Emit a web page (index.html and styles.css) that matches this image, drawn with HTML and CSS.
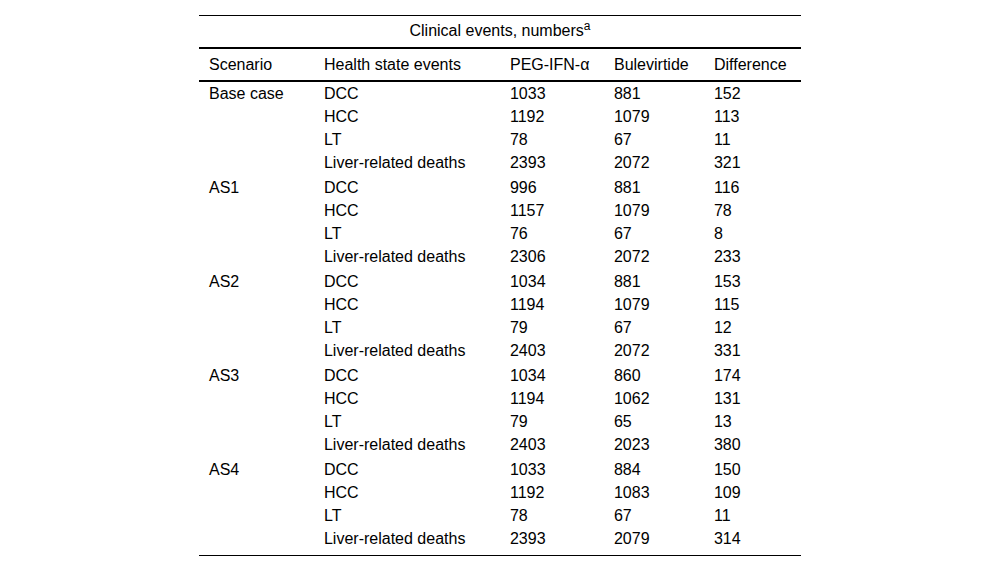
FILE: index.html
```html
<!DOCTYPE html>
<html lang="en">
<head>
<meta charset="utf-8">
<title>Clinical events</title>
<link rel="stylesheet" href="styles.css">
</head>
<body>
<table class="events">
  <colgroup>
    <col class="c-scen"><col class="c-state"><col class="c-peg"><col class="c-bul"><col class="c-diff">
  </colgroup>
  <thead>
    <tr class="title-row"><th colspan="5">Clinical events, numbers<sup>a</sup></th></tr>
    <tr class="head-row"><th>Scenario</th><th>Health state events</th><th>PEG-IFN-α</th><th>Bulevirtide</th><th>Difference</th></tr>
  </thead>
  <tbody>
    <tr><td>Base case</td><td>DCC</td><td>1033</td><td>881</td><td>152</td></tr>
    <tr><td></td><td>HCC</td><td>1192</td><td>1079</td><td>113</td></tr>
    <tr><td></td><td>LT</td><td>78</td><td>67</td><td>11</td></tr>
    <tr><td></td><td>Liver-related deaths</td><td>2393</td><td>2072</td><td>321</td></tr>
    <tr class="group-start"><td>AS1</td><td>DCC</td><td>996</td><td>881</td><td>116</td></tr>
    <tr><td></td><td>HCC</td><td>1157</td><td>1079</td><td>78</td></tr>
    <tr><td></td><td>LT</td><td>76</td><td>67</td><td>8</td></tr>
    <tr><td></td><td>Liver-related deaths</td><td>2306</td><td>2072</td><td>233</td></tr>
    <tr class="group-start"><td>AS2</td><td>DCC</td><td>1034</td><td>881</td><td>153</td></tr>
    <tr><td></td><td>HCC</td><td>1194</td><td>1079</td><td>115</td></tr>
    <tr><td></td><td>LT</td><td>79</td><td>67</td><td>12</td></tr>
    <tr><td></td><td>Liver-related deaths</td><td>2403</td><td>2072</td><td>331</td></tr>
    <tr class="group-start"><td>AS3</td><td>DCC</td><td>1034</td><td>860</td><td>174</td></tr>
    <tr><td></td><td>HCC</td><td>1194</td><td>1062</td><td>131</td></tr>
    <tr><td></td><td>LT</td><td>79</td><td>65</td><td>13</td></tr>
    <tr><td></td><td>Liver-related deaths</td><td>2403</td><td>2023</td><td>380</td></tr>
    <tr class="group-start"><td>AS4</td><td>DCC</td><td>1033</td><td>884</td><td>150</td></tr>
    <tr><td></td><td>HCC</td><td>1192</td><td>1083</td><td>109</td></tr>
    <tr><td></td><td>LT</td><td>78</td><td>67</td><td>11</td></tr>
    <tr class="last-row"><td></td><td>Liver-related deaths</td><td>2393</td><td>2079</td><td>314</td></tr>
  </tbody>
</table>
</body>
</html>
```
FILE: styles.css
```css
html, body {
  margin: 0;
  padding: 0;
  background: #fff;
}
body {
  padding-top: 15px;
  font-family: "Liberation Sans", Arial, sans-serif;
  font-size: 16px;
  color: #000;
}
.events {
  width: 602px;
  margin: 0 auto;
  table-layout: fixed;
  border-collapse: separate;
  border-spacing: 0;
  border-top: 1px solid #000;
  border-bottom: 1px solid #000;
}
.c-scen { width: 115px; }
.c-state { width: 186px; }
.c-peg { width: 104px; }
.c-bul { width: 100px; }
.c-diff { width: 97px; }

.events th,
.events td {
  text-align: left;
  font-weight: normal;
  white-space: nowrap;
  padding: 2px 0 2px 10px;
  line-height: 19px;
  vertical-align: top;
}
.title-row th {
  text-align: center;
  padding: 5px 0 7px 0;
  line-height: 19px;
  border-bottom: 2px solid #000;
}
.title-row sup {
  font-size: 12px;
  line-height: 0;
  vertical-align: 6px;
}
.head-row th {
  padding-top: 6px;
  padding-bottom: 6px;
  line-height: 19px;
  border-bottom: 2px solid #000;
}
.group-start td {
  padding-top: 4px;
}
.last-row td {
  padding-bottom: 7px;
}
```
